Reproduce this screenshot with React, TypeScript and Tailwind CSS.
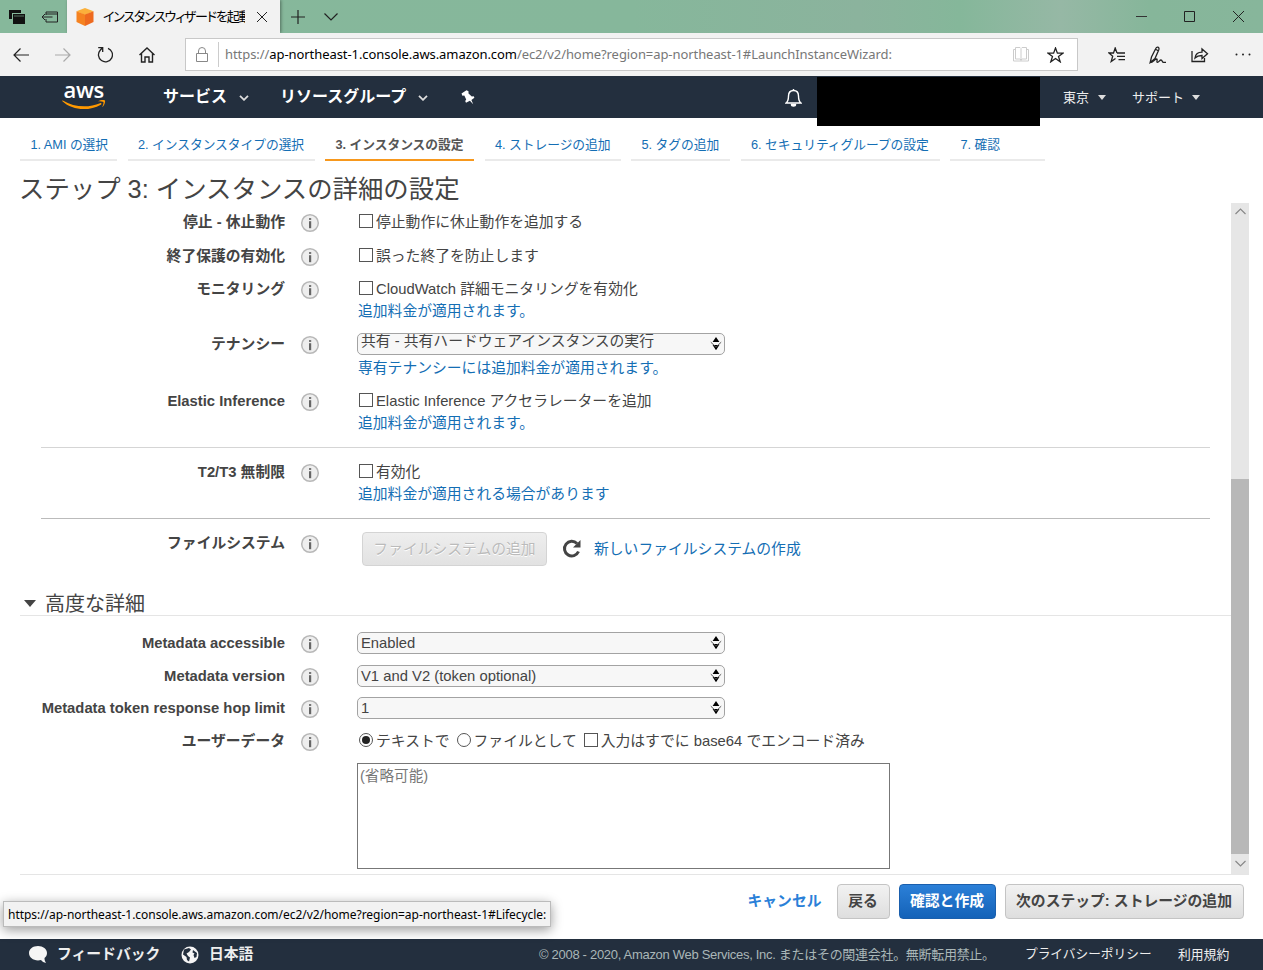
import { ReactNode } from "react";

const wizardSteps = [
  { label: "1. AMI の選択", box: "w-[97px]" },
  { label: "2. インスタンスタイプの選択", box: "w-[187px]" },
  { label: "3. インスタンスの設定", box: "w-[149px]", active: true },
  { label: "4. ストレージの追加", box: "w-[136px]" },
  { label: "5. タグの追加", box: "w-[99px]" },
  { label: "6. セキュリティグループの設定", box: "w-[199px]" },
  { label: "7. 確認", box: "w-[95px]" },
];

function InfoIcon() {
  return (
    <svg width="20" height="20" viewBox="0 0 20 20" className="shrink-0">
      <circle cx="10" cy="10" r="8.3" fill="#eeeeee" stroke="#b8b8b8" strokeWidth="1.5" />
      <path d="M9 5h2.2v2H9z" fill="#777" />
      <path d="M9 8.2h2.2v7H9z" fill="#666" />
    </svg>
  );
}

function Row({ label, className, children }: { label: string; className: string; children: ReactNode }) {
  return (
    <div className={`flex items-start ${className}`}>
      <div className="w-[285px] shrink-0 text-right font-bold">{label}</div>
      <div className="mt-[2px] ml-[15px] w-[57px] shrink-0">
        <InfoIcon />
      </div>
      <div className="min-w-0">{children}</div>
    </div>
  );
}

function Check({ children }: { children: ReactNode }) {
  return (
    <label className="flex h-[22px] items-center">
      <span className="mr-[3px] mb-[3px] ml-[2px] size-[14px] border border-[#555] bg-white" />
      {children}
    </label>
  );
}

function Radio({ checked, children }: { checked?: boolean; children: ReactNode }) {
  return (
    <label className="flex h-[22px] items-center">
      <span className="mr-[3px] mb-[3px] ml-[2px] flex size-[14px] items-center justify-center rounded-full border border-[#555] bg-white">
        {checked && <span className="size-[8px] rounded-full bg-[#222]" />}
      </span>
      {children}
    </label>
  );
}

function Select({ raised, children }: { raised?: boolean; children: ReactNode }) {
  return (
    <div className="flex h-[22px] w-[368px] items-center justify-between overflow-hidden rounded-[5px] border-[1.5px] border-[#a3a3a3] bg-[#f7f7f7] pr-[2px] pl-[3px] text-[#444]">
      <span className={raised ? "-mt-[6px]" : "-mt-px"}>{children}</span>
      <svg width="12" height="14" viewBox="0 0 12 14">
        <path d="M6 0l3.4 5H2.6z M2.6 8h6.8L6 13.2z" fill="#000" />
        <path d="M0.8 5.2l5.2 5 5.2-5" fill="none" stroke="#555" strokeWidth="1" />
      </svg>
    </div>
  );
}

function Note({ children }: { children: ReactNode }) {
  return <a className="ml-px block h-[22px] text-[#146eb4]">{children}</a>;
}

function Caret({ className }: { className?: string }) {
  return (
    <svg width="10" height="6" viewBox="0 0 10 6" className={className}>
      <path d="M1 .8l4 4 4-4" fill="none" stroke="#ddd" strokeWidth="1.8" />
    </svg>
  );
}

function TitleBar() {
  return (
    <div className="flex h-[33px] bg-[linear-gradient(90deg,#86b89b_0%,#86b79b_50%,#8bb39d_68%,#85b79a_76%,#96b8a5_84%,#86b69a_91%,#87b69b_100%)]">
      <div className="flex w-[67px] items-center">
        <svg width="17" height="16" viewBox="0 0 17 16" className="ml-[9px]">
          <path d="M0 1h12v3H3v6H0z" fill="#111" />
          <path d="M4 5h12v10H4z" fill="#111" />
          <path d="M5 7h10" stroke="#86b89b" strokeWidth="0.6" />
        </svg>
        <svg width="18" height="14" viewBox="0 0 18 14" fill="none" stroke="#222" className="ml-[15px]">
          <path d="M5 5V2h11.5v10H5V9 M5 4h11.5 M1 7h10.5 M4 4L1 7l3 3" />
        </svg>
      </div>
      <div className="flex w-[213px] items-center bg-[#f2f2f2] shadow-[1px_0_3px_rgba(0,0,0,0.4)]">
        <svg width="18" height="18" viewBox="0 0 18 18" className="ml-[9px] shrink-0">
          <path d="M9 0l8.5 3.3L9 7 .5 3.3z" fill="#fbb03b" />
          <path d="M.5 3.3L9 6.5V18L.5 14z" fill="#f58220" />
          <path d="M17.5 3.3L9 6.5V18l8.5-4z" fill="#ee6a1f" />
        </svg>
        <span className="ml-[9px] w-[142px] overflow-hidden text-[13px] tracking-[-1.2px] whitespace-nowrap text-black [font-feature-settings:'palt']">
          インスタンスウィザードを起動
        </span>
        <svg width="12" height="12" viewBox="0 0 12 12" className="ml-[11px]" stroke="#222">
          <path d="M1 1l10 10M11 1L1 11" />
        </svg>
      </div>
      <div className="flex flex-1 items-center">
        <svg width="14" height="14" viewBox="0 0 14 14" className="ml-[11px]" stroke="#222" strokeWidth="1.2">
          <path d="M7 0v14M0 7h14" />
        </svg>
        <svg width="14" height="8" viewBox="0 0 14 8" className="ml-[19px]" fill="none" stroke="#222" strokeWidth="1.2">
          <path d="M.5.5L7 7 13.5.5" />
        </svg>
      </div>
      <div className="flex items-center pr-[19px]">
        <svg width="11" height="11" viewBox="0 0 11 11" stroke="#333">
          <path d="M0 5.5h11" />
        </svg>
        <svg width="11" height="11" viewBox="0 0 11 11" className="ml-[37px]" fill="none" stroke="#222">
          <path d="M.5.5h10v10H.5z" />
        </svg>
        <svg width="11" height="11" viewBox="0 0 11 11" className="ml-[38px]" stroke="#222">
          <path d="M0 0l11 11M11 0L0 11" />
        </svg>
      </div>
    </div>
  );
}

function AddressBar() {
  return (
    <div className="flex h-[43px] items-center bg-[#f2f2f2]">
      <svg width="16" height="14" viewBox="0 0 16 14" className="ml-[13px]" fill="none" stroke="#222" strokeWidth="1.2">
        <path d="M16 7H1M7.5.5L1 7l6.5 6.5" />
      </svg>
      <svg width="16" height="14" viewBox="0 0 16 14" className="ml-[26px]" fill="none" stroke="#aaa" strokeWidth="1.2">
        <path d="M0 7h15M8.5.5L15 7l-6.5 6.5" />
      </svg>
      <svg width="16" height="17" viewBox="0 0 16 17" className="ml-[26px]" fill="none" stroke="#222" strokeWidth="1.3">
        <path d="M11 2.3A7 7 0 1 1 3.2 4.200L5.400 1.800M1.200 1.600h4.500v4.500" />
      </svg>
      <svg width="16" height="16" viewBox="0 0 16 16" className="ml-[26px]" fill="none" stroke="#222" strokeWidth="1.4">
        <path d="M.5 8L8 1l7.5 7M2.5 6.5V15H6v-5h4v5h3.5V6.5" />
      </svg>
      <div className="ml-[30px] flex h-[33px] w-[893px] items-center border-[1.5px] border-[#c8c8c8] bg-white font-['Noto_Sans','Open_Sans',sans-serif] text-[13px]">
        <svg width="12" height="15" viewBox="0 0 12 15" className="ml-[10px]" fill="none" stroke="#888">
          <path d="M.5 6.5h11v8H.5zM2.5 6.5V4a3.5 3.5 0 0 1 7 0v2.5" />
        </svg>
        <span className="ml-[10px] h-[25px] w-px bg-[#ccc]" />
        <span className="ml-[6px] w-[788px] tracking-[-0.07px] whitespace-nowrap text-[#777]">
          https://<span className="text-black">ap-northeast-1.console.aws.amazon.com</span>
          /ec2/v2/home?region=ap-northeast-1#LaunchInstanceWizard:
        </span>
        <svg width="16" height="15" viewBox="0 0 16 15" fill="none" stroke="#ccc">
          <path d="M8 2v12M2.5.5H7l1 1 1-1h4.5V12H9l-1 1-1-1H2.5zM2 2.5H.5V14h15V2.5H14" />
        </svg>
        <svg width="17" height="16" viewBox="0 0 17 16" className="ml-[18px]" fill="none" stroke="#222" strokeWidth="1.3">
          <path d="M8.5 1l1.9 5.2h5.5l-4.4 3.3 1.7 5.3-4.7-3.3-4.7 3.3 1.700-5.300L1.100 6.200h5.500z" />
        </svg>
      </div>
      <svg width="18" height="16" viewBox="0 0 18 16" className="ml-[30px]" fill="none" stroke="#222" strokeWidth="1.3">
        <path d="M9 6L7.2 1 5.500 6H.9l3.800 3.200-1.500 5.300L7.500 11.500M9 6h8M9 9.300h8M10.500 12.600H17" />
      </svg>
      <svg width="18" height="18" viewBox="0 0 18 18" className="ml-[23px]" fill="none" stroke="#222" strokeWidth="1.3">
        <path d="M1.200 16.500L2.500 11 6.500 3C7.800.2 10.700.8 9.800 3.800L6 12.500z M6.500 3.200l2.800 1.500M1.200 16.500c3 0 4.500-3.500 6.300-3.500 1.600 0-.5 3.400 1 3.400s2-2.400 3.500-2.400 1 2.300 2.500 2.300h2.500" />
      </svg>
      <svg width="18" height="16" viewBox="0 0 18 16" className="ml-[24px]" fill="none" stroke="#222" strokeWidth="1.3">
        <path d="M1 4v10.500h12.500V11M4 11c.6-4 3-5.800 7-5.800V2l5.500 4.800-5.500 4.800V8.500c-3 0-5 .5-7 2.500z" />
      </svg>
      <svg width="16" height="4" viewBox="0 0 16 4" className="ml-[26px]" fill="#222">
        <circle cx="1.5" cy="1.5" r="1" />
        <circle cx="8" cy="1.5" r="1" />
        <circle cx="14.5" cy="1.5" r="1" />
      </svg>
    </div>
  );
}

function ConsoleNav() {
  return (
    <div className="flex h-[42px] items-center bg-[#232f3e] text-white">
      <div className="relative ml-[62px] h-[34px] w-[44px]">
        <span className="absolute -top-[6px] left-[1.5px] font-['Open_Sans',sans-serif] text-[22px] leading-[30px] font-semibold tracking-[-0.3px]">aws</span>
        <svg width="44" height="11" viewBox="0 0 44 11" className="absolute top-[19px] left-0">
          <path d="M.8 1.5C12 8.500 27 9 38 4.200c1.500-.6 2 .6.8 1.500C27 12.500 10 11.500.4 2.300c-.5-.5 0-1 .4-.8z" fill="#f90" />
          <path d="M36 2.200c2.500-1.700 6.700-1.400 7-.8.4.7-.3 4.800-2.800 6.700 1-2.500 1.600-4.600 1.200-5.200-.4-.5-3-.6-5.400-.7z" fill="#f90" />
        </svg>
      </div>
      <span className="ml-[57px] w-[68px] text-[16px] font-bold">サービス</span>
      <Caret className="mt-[2px] ml-[8px]" />
      <span className="ml-[31px] w-[130px] text-[16px] font-bold">リソースグループ</span>
      <Caret className="mt-[2px] ml-[8px]" />
      <svg width="14" height="15" viewBox="0 0 14 15" className="ml-[33px]" fill="#fff">
        <path d="M.5 3.5L5.500.2 7.500 1.200 7.500 3.500 10.800 6.500l1.900-.2.700 1.500-3 2.200 1.800 4.300-3.300-3.500L5 12.800l-.8-1.700 1-1.600L3.300 5.500l-1.900.3z" />
      </svg>
      <svg width="17" height="19" viewBox="0 0 17 19" className="ml-[310px]" fill="none" stroke="#fff" strokeWidth="1.4">
        <path d="M1 15c2-1.500 2.500-4 2.500-7 0-3.500 2-5.500 5-5.500s5 2 5 5.500c0 3 .5 5.500 2.500 7z" />
        <path d="M8.500 1v1.500M6.500 16.500a2 1.500 0 0 0 4 0z" fill="#fff" />
      </svg>
      {/* account name is blacked out */}
      <div className="relative ml-[15px] h-[42px] w-[223px]">
        <div className="absolute top-px left-0 z-10 h-[49px] w-[223px] bg-black" />
      </div>
      <span className="mt-[2px] ml-[23px] w-[28px] text-[13px] text-[#eee]">東京</span>
      <svg width="8" height="5" viewBox="0 0 8 5" className="mt-px ml-[7px]" fill="#ddd">
        <path d="M0 0h8L4 5z" />
      </svg>
      <span className="mt-[2px] ml-[26px] w-[53px] text-[13px] text-[#eee]">サポート</span>
      <svg width="8" height="5" viewBox="0 0 8 5" className="mt-px ml-[7px]" fill="#ddd">
        <path d="M0 0h8L4 5z" />
      </svg>
    </div>
  );
}

function Footer() {
  return (
    <div className="flex h-[31px] items-center bg-[#232f3e] text-[13px] whitespace-nowrap text-[#eee]">
      <svg width="20" height="19" viewBox="0 0 20 19" className="ml-[28px]" fill="#f5f5f5">
        <path d="M10 1c5 0 9 3 9 7 0 2-1 4-2.500 5 0 2 .5 3.500 1.500 5-2-.3-4-1.500-5-3-1 .3-2 .4-3 .4-5 0-9-3.200-9-7.400S5 1 10 1z" />
      </svg>
      <span className="ml-[9px] w-[105px] text-[14.8px] font-bold">フィードバック</span>
      <svg width="18" height="18" viewBox="0 0 18 18" className="ml-[19px]">
        <circle cx="9" cy="9" r="8.5" fill="#f5f5f5" />
        <path d="M3 3.5L8 2l2 1.500L8 6 5.500 7.500 7 10l2 1.500-1 4-2-1.500-.5-3L2 8.500zM12 4l4 3-.5 4-2 1-1-3 1-1.500-2-1z" fill="#232f3e" />
      </svg>
      <span className="ml-[10px] w-[47px] text-[14.8px] font-bold">日本語</span>
      <span className="ml-[283px] w-[460px] tracking-[-0.3px] text-[#aab7b8]">
        © 2008 - 2020, Amazon Web Services, Inc. またはその関連会社。無断転用禁止。
      </span>
      <span className="ml-[26px] w-[128px] text-[12.7px]">プライバシーポリシー</span>
      <span className="ml-[25px] text-[12.8px]">利用規約</span>
    </div>
  );
}

export default function App() {
  return (
    <div className="relative flex h-[970px] w-[1263px] flex-col overflow-hidden bg-white font-['Liberation_Sans','Noto_Sans_CJK_JP',sans-serif] text-[14.8px] text-[#444]">
      <TitleBar />
      <AddressBar />
      <ConsoleNav />

      <div className="mt-[11px] flex h-[32px] gap-[10.5px] pl-[20px] text-[12.75px] tracking-[-0.04px] whitespace-nowrap">
        {wizardSteps.map((step) => (
          <div
            key={step.label}
            className={`shrink-0 border-b-2 pt-[6px] pl-[10.5px] leading-[20px] ${step.box} ${
              step.active ? "border-[#f7981d] font-bold text-[#555]" : "border-[#eaeaea] text-[#146eb4]"
            }`}
          >
            {step.label}
          </div>
        ))}
      </div>

      <h1 className="mt-[10px] h-[32px] pl-[19px] text-[25.4px] leading-[36px] whitespace-nowrap">ステップ 3: インスタンスの詳細の設定</h1>

      <div className="flex h-[671px] pr-[14px]">
        <div className="flex-1 leading-[22px] whitespace-nowrap">
          <Row label="停止 - 休止動作" className="mt-[8px] h-[34px]">
            <Check>停止動作に休止動作を追加する</Check>
          </Row>
          <Row label="終了保護の有効化" className="h-[33px]">
            <Check>誤った終了を防止します</Check>
          </Row>
          <Row label="モニタリング" className="h-[55px]">
            <Check>CloudWatch 詳細モニタリングを有効化</Check>
            <Note>追加料金が適用されます。</Note>
          </Row>
          <Row label="テナンシー" className="h-[57px]">
            <Select raised>共有 - 共有ハードウェアインスタンスの実行</Select>
            <div className="mt-[2px]">
              <Note>専有テナンシーには追加料金が適用されます。</Note>
            </div>
          </Row>
          <Row label="Elastic Inference" className="h-[57px]">
            <Check>Elastic Inference アクセラレーターを追加</Check>
            <Note>追加料金が適用されます。</Note>
          </Row>
          <div className="mr-[21px] ml-[41px] h-px bg-[#d5d5d5]" />
          <Row label="T2/T3 無制限" className="mt-[13px] h-[57px]">
            <Check>有効化</Check>
            <Note>追加料金が適用される場合があります</Note>
          </Row>
          <div className="mr-[21px] ml-[41px] h-px bg-[#bbb]" />
          <Row label="ファイルシステム" className="mt-[13px] h-[60px]">
            <div className="flex items-center pl-[5px]">
              <div className="flex h-[34px] w-[185px] items-center justify-center rounded-[4px] border border-[#d4d4d4] bg-linear-to-b from-[#eee] to-[#e2e2e2] text-[#bbb] [text-shadow:0_1px_0_#fff]">
                ファイルシステムの追加
              </div>
              <svg width="20" height="20" viewBox="0 0 20 20" className="mr-[12px] ml-[15px]">
                <path d="M16.5 12.5A7.3 7.3 0 1 1 15 4.5" fill="none" stroke="#444" strokeWidth="3" />
                <path d="M18.5 1v7.5H11z" fill="#444" />
              </svg>
              <a className="text-[#146eb4]">新しいファイルシステムの作成</a>
            </div>
          </Row>
          <div className="ml-[20px] flex h-[24px] items-center border-b border-[#e5e5e5] pl-[4px] text-[20px]">
            <svg width="12" height="7" viewBox="0 0 12 7" className="mr-[9px]">
              <path d="M0 0h12L6 7z" fill="#444" />
            </svg>
            高度な詳細
          </div>
          <Row label="Metadata accessible" className="mt-[16px] h-[33px]">
            <Select>Enabled</Select>
          </Row>
          <Row label="Metadata version" className="h-[32px]">
            <Select>V1 and V2 (token optional)</Select>
          </Row>
          <Row label="Metadata token response hop limit" className="h-[33px]">
            <Select>1</Select>
          </Row>
          <Row label="ユーザーデータ" className="h-[140px]">
            <div className="flex gap-[5px]">
              <Radio checked>テキストで</Radio>
              <Radio>ファイルとして</Radio>
              <Check>入力はすでに base64 でエンコード済み</Check>
            </div>
            <div className="mt-[11px] h-[106px] w-[533px] border-[1.5px] border-[#777] pt-px pl-[2px] text-[14.6px] text-[#777]">(省略可能)</div>
          </Row>
        </div>

        <div className="flex w-[18px] flex-col items-center bg-[#e6e6e6]">
          <svg width="11" height="17" viewBox="0 0 11 17" fill="none" stroke="#888" strokeWidth="1.2">
            <path d="M.5 11l5-5 5 5" />
          </svg>
          <div className="mt-[259px] h-[375px] w-full bg-[#b8b8b8]" />
          <svg width="11" height="19" viewBox="0 0 11 19" fill="none" stroke="#888" strokeWidth="1.2">
            <path d="M.5 7l5 5 5-5" />
          </svg>
        </div>
      </div>

      <div className="mr-[14px] ml-[20px] h-px shrink-0 bg-[#e5e5e5]" />

      <div className="mt-[9px] mr-[19.5px] flex h-[35px] items-center justify-end gap-[9px] font-bold whitespace-nowrap">
        <a className="mr-[6px] text-[#2a80d8]">キャンセル</a>
        <div className="flex h-[35px] w-[53px] items-center justify-center rounded-[4px] border border-[#c4c4c4] bg-linear-to-b from-[#f2f2f2] to-[#dedede]">戻る</div>
        <div className="flex h-[35px] w-[97px] items-center justify-center rounded-[4px] border border-[#1a5fad] bg-linear-to-b from-[#2b80d8] to-[#1462b8] text-white">
          確認と作成
        </div>
        <div className="flex h-[35px] w-[239px] items-center justify-center rounded-[4px] border border-[#c4c4c4] bg-linear-to-b from-[#f2f2f2] to-[#dedede]">
          次のステップ: ストレージの追加
        </div>
      </div>

      <div className="mt-auto">
        <Footer />
      </div>

      {/* browser link preview */}
      <div className="absolute top-[901px] left-[3px] flex h-[26px] w-[548px] items-center border border-[#bbb] bg-[#f2f2f2] pt-px pl-[4px] font-['Noto_Sans','Open_Sans',sans-serif] text-[12px] tracking-[-0.04px] whitespace-nowrap text-black shadow-[0_3px_12px_rgba(0,0,0,0.4)]">
        https://ap-northeast-1.console.aws.amazon.com/ec2/v2/home?region=ap-northeast-1#Lifecycle:
      </div>
    </div>
  );
}
